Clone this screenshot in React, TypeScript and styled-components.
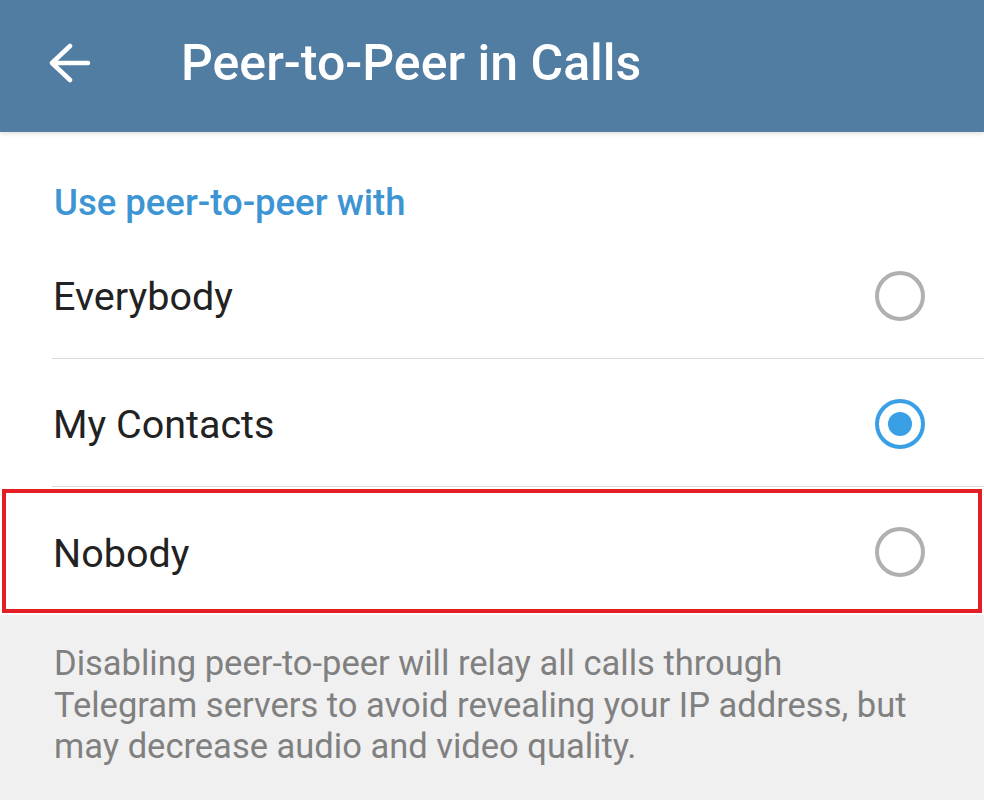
import styled, { createGlobalStyle } from 'styled-components';

const GlobalStyle = createGlobalStyle`
	html, body {
		margin: 0;
		padding: 0;
		background: #f0f0f0;
	}
	body {
		font-family: Roboto, 'Noto Sans', 'Liberation Sans', sans-serif;
	}
`;

const Page = styled.div`
	width: 984px;
	min-height: 800px;
	display: flex;
	flex-direction: column;
	background: #f0f0f0;
`;

const Header = styled.header`
	height: 132px;
	box-sizing: border-box;
	padding: 0 0 7px 49px;
	display: flex;
	align-items: center;
	background: #517da2;
	box-shadow: 0 2px 4px rgba(0, 0, 0, 0.12);
	position: relative;
	z-index: 1;
`;

const BackButton = styled.button`
	display: flex;
	padding: 0;
	border: none;
	background: none;
	cursor: pointer;
`;

const Title = styled.h1`
	margin: 0 0 0 90px;
	font-size: 50px;
	font-weight: 500;
	color: #ffffff;
`;

const Section = styled.section`
	background: #ffffff;
`;

const SectionHeader = styled.h2`
	height: 99px;
	box-sizing: border-box;
	margin: 0;
	padding: 42px 0 0 54px;
	display: flex;
	align-items: center;
	font-size: 36.5px;
	font-weight: 500;
	color: #3d95d3;
`;

const Row = styled.label<{ $highlighted?: boolean }>`
	display: flex;
	padding-left: 52px;
	cursor: pointer;
	${({ $highlighted }) => $highlighted && 'outline: 4px solid #e31e24; outline-offset: -6px;'}
`;

const RowInner = styled.div<{ $divider?: boolean }>`
	flex: 1;
	height: 128px;
	box-sizing: border-box;
	padding: 4px 59px 0 1px;
	display: flex;
	align-items: center;
	justify-content: space-between;
	border-bottom: ${({ $divider }) => ($divider ? '1px solid #dcdcdc' : 'none')};
`;

const RowText = styled.span`
	font-size: 39.5px;
	color: #222222;
`;

const Radio = styled.span<{ $checked?: boolean }>`
	width: 50px;
	height: 50px;
	margin-top: -2px;
	box-sizing: border-box;
	border-radius: 50%;
	border: 4.5px solid ${({ $checked }) => ($checked ? '#3aa0e6' : '#b0b0b0')};
	display: flex;
	align-items: center;
	justify-content: center;
`;

const RadioDot = styled.span`
	width: 24px;
	height: 24px;
	border-radius: 50%;
	background: #3aa0e6;
`;

const Footer = styled.p`
	margin: 0;
	padding: 28px 60px 28px 54px;
	font-size: 34.5px;
	line-height: 41.5px;
	color: #808080;
`;

const options = [
	{ label: 'Everybody', checked: false },
	{ label: 'My Contacts', checked: true },
	{ label: 'Nobody', checked: false, highlighted: true },
];

const BackArrow = () => (
	<svg width='42' height='40' viewBox='0 0 42 40' fill='none'>
		<path
			d='M3 20H39M21 3L3 20L21 37'
			stroke='#ffffff'
			strokeWidth='4.5'
			strokeLinecap='round'
			strokeLinejoin='round'
		/>
	</svg>
);

const App = () => {
	return (
		<Page>
			<GlobalStyle />
			<Header>
				<BackButton aria-label='Back'>
					<BackArrow />
				</BackButton>
				<Title>Peer-to-Peer in Calls</Title>
			</Header>
			<Section>
				<SectionHeader>Use peer-to-peer with</SectionHeader>
				{options.map((option, i) => (
					<Row key={option.label} $highlighted={option.highlighted}>
						<RowInner $divider={i < options.length - 1}>
							<RowText>{option.label}</RowText>
							<Radio $checked={option.checked}>{option.checked && <RadioDot />}</Radio>
						</RowInner>
					</Row>
				))}
			</Section>
			<Footer>
				Disabling peer-to-peer will relay all calls through Telegram servers to avoid revealing your IP
				address, but may decrease audio and video quality.
			</Footer>
		</Page>
	);
};

export default App;
